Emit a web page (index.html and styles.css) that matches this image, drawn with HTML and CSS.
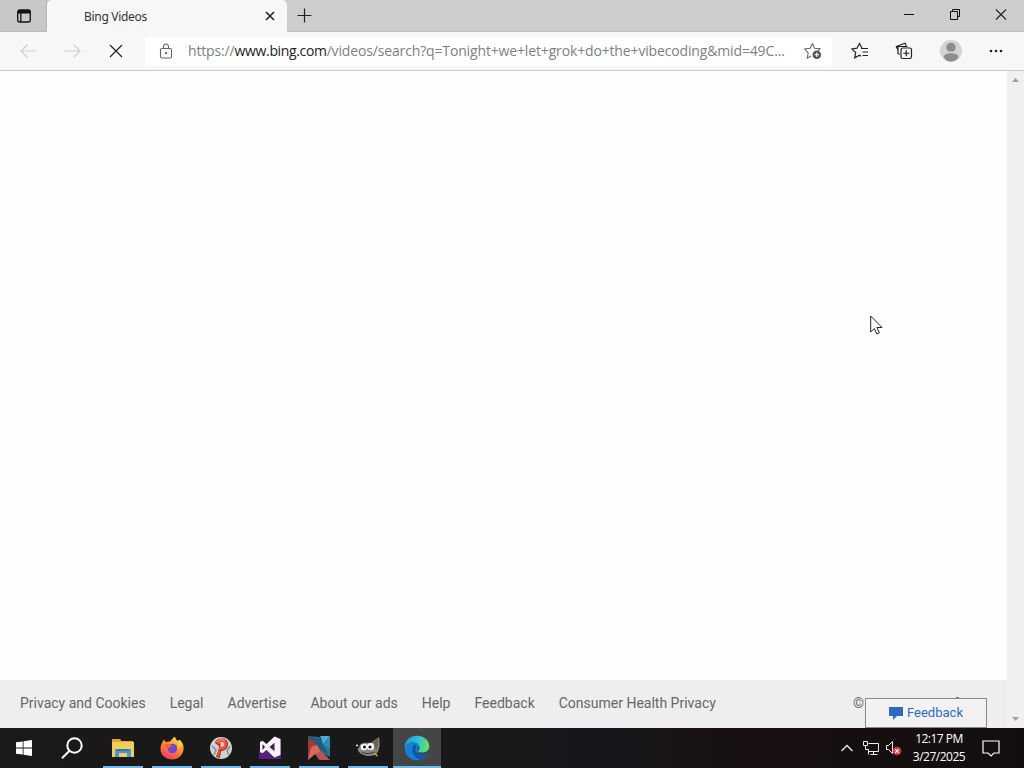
FILE: index.html
```html
<!DOCTYPE html>
<html lang="en">
<head>
    <meta charset="UTF-8">
    <meta name="viewport" content="width=device-width, initial-scale=1.0">
    <title>Bing Videos</title>
    <link rel="stylesheet" href="styles.css">
</head>
<body>
    <div class="title-bar">
        <div class="tab-actions">
            <svg width="16" height="16" viewBox="0 0 16 16" fill="none" stroke="#111" stroke-width="1.3">
                <rect x="1.7" y="2" width="12.6" height="12" rx="2"/>
                <path d="M2 3.2h12M2 4.6h12" stroke-width="1.7"/>
                <path d="M4.8 5v9"/>
            </svg>
        </div>
        <div class="tab">
            <span class="tab-title">Bing Videos</span>
            <svg width="10" height="10" viewBox="0 0 10 10" stroke="#222" stroke-width="1.6"><path d="M1 1l8 8M9 1L1 9"/></svg>
        </div>
        <svg class="new-tab" width="16" height="16" viewBox="0 0 16 16" stroke="#222" stroke-width="1.2"><path d="M7.500 .500v14M.500 7.500h14"/></svg>
        <div class="window-buttons">
            <svg width="46" height="30" viewBox="0 0 46 30" stroke="#111"><path d="M18 14.5h10"/></svg>
            <svg width="46" height="30" viewBox="0 0 46 30" fill="none" stroke="#111"><path d="M18.5 11.5h7v8h-7zM20.5 11.5v-2h7v7h-2"/></svg>
            <svg width="46" height="30" viewBox="0 0 46 30" stroke="#222" stroke-width="1.1"><path d="M18 9.5l10 10M28 9.5l-10 10"/></svg>
        </div>
    </div>

    <div class="toolbar">
        <div class="nav-buttons">
            <svg width="44" height="38" viewBox="0 0 44 38" fill="none" stroke="#d0d0d0" stroke-width="1.2"><path d="M36 19H21M27.5 12.500L21 19l6.500 6.500"/></svg>
            <svg width="44" height="38" viewBox="0 0 44 38" fill="none" stroke="#d0d0d0" stroke-width="1.2"><path d="M20 19h15.500M29.500 12.500L36 19l-6.500 6.500"/></svg>
            <svg width="44" height="38" viewBox="0 0 44 38" stroke="#222" stroke-width="1.2"><path d="M22 13l12 12M34 13L22 25"/></svg>
        </div>
        <div class="address-bar">
            <svg width="14" height="17" viewBox="0 0 14 17" fill="none" stroke="#666" stroke-width="1.1">
                <rect x="1.500" y="5.500" width="11" height="9.500" rx="1.500"/>
                <path d="M4.500 5.500V4a2.500 3 0 0 1 5 0v1.500"/>
                <circle cx="7" cy="10.200" r=".6" fill="#555"/>
            </svg>
            <span class="url">https://<b>www.bing.com</b>/videos/search?q=Tonight+we+let+grok+do+the+vibecoding&amp;mid=49C...</span>
            <svg class="add-favorite" width="18" height="18" viewBox="0 0 18 18" fill="none" stroke="#666" stroke-width="1.1">
                <path d="M8.500 1.500l2 4.800 5.500.5-2 2M7 14l-3.800 2.200 1-5.300L.8 7l5.400-.7 2.300-4.800"/>
                <circle cx="12.800" cy="12.800" r="4.300" fill="#555" stroke="none"/>
                <path d="M12.800 10.500v4.600M10.500 12.800h4.600" stroke="#fff"/>
            </svg>
        </div>
        <div class="tools">
            <svg width="18" height="18" viewBox="0 0 18 18" fill="none" stroke="#222" stroke-width="1.2">
                <path d="M11 6.200L8.500 1.500 6 6.200.8 6.900l3.900 3.600-1 5.300 4.800-2.500 1.500 1"/>
                <path d="M10 6.500h7M11.500 10H17M11.500 13.500H17"/>
            </svg>
            <svg width="18" height="18" viewBox="0 0 18 18" fill="none" stroke="#222" stroke-width="1.2">
                <path d="M4.500 12.500L3 11.500V8L1.300 4.500 10 1.200l1.300 2.500M3 10.500V4.500h9.500"/>
                <rect x="6" y="6" width="10.500" height="10.500" rx="1.800"/>
                <path d="M11.250 8.300v6M8.300 11.250h6"/>
            </svg>
            <svg width="22" height="22" viewBox="0 0 22 22">
                <circle cx="11" cy="11" r="11" fill="#d4d3d1"/>
                <circle cx="11" cy="7.500" r="4.700" fill="#8e8c8a"/>
                <path d="M3.700 17c0-5 14.600-5 14.600 0-1.500 3-4.500 4.500-7.300 4.500S5.200 20 3.700 17z" fill="#8e8c8a"/>
                <path d="M4.500 13.300q6.500-2.300 13 0" fill="none" stroke="#d4d3d1" stroke-width="1.300"/>
            </svg>
            <svg width="16" height="16" viewBox="0 0 16 16" fill="#222"><circle cx="3" cy="8" r="1.300"/><circle cx="8" cy="8" r="1.300"/><circle cx="13" cy="8" r="1.300"/></svg>
        </div>
    </div>

    <div class="viewport">
        <div class="page">
            <div class="footer">
                <span>Privacy and Cookies</span>
                <span>Legal</span>
                <span>Advertise</span>
                <span>About our ads</span>
                <span>Help</span>
                <span>Feedback</span>
                <span>Consumer Health Privacy</span>
                <span class="copyright">©</span>
            </div>
        </div>
        <div class="scrollbar">
            <svg width="7" height="4" viewBox="0 0 7 4" fill="#a0a0a0"><path d="M0 4L3.500 0 7 4z"/></svg>
            <svg width="7" height="4" viewBox="0 0 7 4" fill="#a0a0a0"><path d="M0 0h7L3.500 4z"/></svg>
        </div>
        <div class="feedback">
            <svg width="14" height="14" viewBox="0 0 14 14" fill="#2f6ac0"><path d="M0 1h14v9H8l-4 4v-4H0z"/></svg>
            <span>Feedback</span>
        </div>
    </div>

    <div class="taskbar">
        <div class="start">
            <svg width="16" height="16" viewBox="0 0 16 16" fill="#fff"><path d="M0 2.300l6.700-.9v6.200H0zM7.500 1.300L16 0v7.600H7.500zM0 8.400h6.700v6.200L0 13.700zM7.500 8.400H16V16l-8.500-1.300z"/></svg>
        </div>
        <div class="start">
            <svg width="22" height="22" viewBox="0 0 22 22" fill="none" stroke="#fff" stroke-width="2"><circle cx="13.500" cy="8.500" r="7.200"/><path d="M8.500 13.700L1 21.300"/></svg>
        </div>
        <div class="apps">
            <div class="app">
                <svg width="22" height="20" viewBox="0 0 22 20">
                    <path d="M0 1h8l1.500 2H21v3H0z" fill="#e2a52c"/>
                    <path d="M0 4h22v15H0z" fill="#f3cd5c"/>
                    <path d="M3 19v-8h16v8h-4v-4H7v4z" fill="#4a96cf"/>
                    <path d="M5 11h12v2H5z" fill="#3878ad"/>
                </svg>
            </div>
            <div class="app">
                <svg width="24" height="24" viewBox="0 0 24 24">
                    <defs>
                        <linearGradient id="fire" x1=".8" y1="0" x2=".3" y2="1">
                            <stop offset="0" stop-color="#ffe44a"/>
                            <stop offset=".5" stop-color="#ff8a2c"/>
                            <stop offset="1" stop-color="#f03470"/>
                        </linearGradient>
                    </defs>
                    <path d="M2.500 6L4 3.500 5.500 6 10 5.500 14.500.500 17 5l3-1c3 3 4 6 3.500 9.500C22.800 19.500 18 23.500 12.300 23.500 5.500 23.500.5 19 .5 13 .5 10 1.200 8 2.500 6z" fill="url(#fire)"/>
                    <circle cx="12.500" cy="12.500" r="4.800" fill="#7547cf"/>
                    <path d="M4.500 8c3-1 5.500-.5 7.500 2-1 2-4 1-4.500 3.500C5.500 13 4.500 11 4.500 8z" fill="#f5662b"/>
                    <path d="M14.500 1c1 4 5 6 3 13 3-3 4-6 2.500-10L17 5z" fill="#ffd33b"/>
                </svg>
            </div>
            <div class="app">
                <svg width="22" height="22" viewBox="0 0 22 22">
                    <circle cx="11" cy="11" r="11" fill="#ccd3d2"/>
                    <path d="M2 9l4 4-2 5M20 9l-3 5 2 4" stroke="#849394" stroke-width="1.500" fill="none"/>
                    <path d="M5 6C6 0 18 0 18 7c0 5-4 7-7 7l-1 7-4-1c1-4 3-7 3-11z" fill="#a92a1c"/>
                    <path d="M5 5.500C7 .500 17 .500 17 7c0 4-3.500 6-7 6L9 20l-2-1c1-4 3-8 2.500-12z" fill="#ec573d"/>
                    <path d="M10.500 5c3-.500 4 1 3.500 3-.5 1.500-2 2-3 2z" fill="#f3cfc6"/>
                    <path d="M7 5c2-3 6-3 8-1" stroke="#ff9c86" fill="none"/>
                </svg>
            </div>
            <div class="app">
                <svg width="24" height="24" viewBox="0 0 24 24">
                    <path d="M1 15l4 2 6-4 6 5v5H1z" fill="#54207b"/>
                    <path d="M17 23V1.500L23 4v19z" fill="#54207b"/>
                    <path d="M16.500.500L22.500 3v16l-6 2.500-8-7.500-4 3.300L2 16V6l2.500-1.300 4 3.300z" fill="#f8f2fb"/>
                    <path d="M4.500 8v6L7 11zM16.500 6.800v8.400L11.500 11z" fill="#3c1c52"/>
                </svg>
            </div>
            <div class="app">
                <svg width="24" height="24" viewBox="0 0 24 24">
                    <path d="M1 0l11 1 4 6 7-7v21l-8-4z" fill="#2f7496"/>
                    <path d="M1 0l12 3 9 16-9-5z" fill="#225b7d"/>
                    <path d="M13 0h10l-7 8z" fill="#4aaed6"/>
                    <path d="M16 8l7-7v12z" fill="#2f8bb5"/>
                    <path d="M1 1l8 7 5 7 9 9H12l-4-6-7 6z" fill="#a33b35"/>
                    <path d="M1 24l3-13 6-2 4 7-6 2z" fill="#d96858"/>
                    <path d="M14 15l9 9H13l-5-6z" fill="#b65450"/>
                </svg>
            </div>
            <div class="app">
                <svg width="26" height="22" viewBox="0 0 26 22">
                    <path d="M5 8c3-4 9-1 12-3l7-5c1 6 1 12-2 16-4 5-15 3-18-1-2-2-1-5 1-7z" fill="#8b867e"/>
                    <path d="M18 5l5-4c1 5 0 9-2 13z" fill="#67645f"/>
                    <circle cx="2.500" cy="9" r="2" fill="#151515"/>
                    <circle cx="2" cy="8.500" r="1" fill="#fff"/>
                    <circle cx="9" cy="10" r="3.300" fill="#fff"/><circle cx="15.500" cy="9.500" r="3.600" fill="#fff"/>
                    <circle cx="9.500" cy="10" r="1.500" fill="#111"/><circle cx="15" cy="10" r="1.600" fill="#111"/>
                    <path d="M7 15c5 3 9 1 13 0" fill="none" stroke="#37332f"/>
                    <path d="M17 16l5 1 1 3z" fill="#d99b54"/>
                </svg>
            </div>
            <div class="app active">
                <svg width="26" height="26" viewBox="0 0 26 26">
                    <defs>
                        <linearGradient id="wave" x1="0" y1=".5" x2="1" y2=".6">
                            <stop offset="0" stop-color="#1b9de0"/>
                            <stop offset=".5" stop-color="#2bbfd3"/>
                            <stop offset="1" stop-color="#6be45c"/>
                        </linearGradient>
                    </defs>
                    <path d="M.7 13C.7 6 6 2 12 4c4 1 5 5 3 7-3 2-2 9 3 9 2 0 4-.5 6-1.500-2 4-6 6.800-11 6.800C6 25.300.7 20 .7 13z" fill="#1681d3"/>
                    <path d="M.7 12C1 5 6.500.7 13 .7S25.300 5.500 25.300 11c0 5-4 6.500-7.500 6.500-3 0-4.500-.7-3-2.500 2-4-1-8-5.500-8C5 7 2 9 .7 12z" fill="url(#wave)"/>
                    <path d="M10 10c-4 4-1 13 6 14.800 3-.3 6-2.500 8-6.300-6 3-12 1-12.500-4 0-2 .5-3 1.500-4-.7-1-2-1.300-3-.5z" fill="#1058ad"/>
                </svg>
            </div>
        </div>
        <div class="tray">
            <svg width="12" height="8" viewBox="0 0 12 8" fill="none" stroke="#eee" stroke-width="1.300"><path d="M.5 7L6 1.500 11.500 7"/></svg>
            <svg class="network" width="17" height="15" viewBox="0 0 17 15" fill="none" stroke="#eee">
                <path d="M5.500 2.500h10v8h-10M10.500 10.500v3M7.500 13.500h7M.5.500h4v4h-4zM2.500 4.500v4h3v5"/>
            </svg>
            <svg class="volume" width="17" height="16" viewBox="0 0 17 16">
                <path d="M1.500 5.500h2l4-4v12l-4-4h-2z" fill="none" stroke="#eee"/>
                <circle cx="12" cy="11" r="4.300" fill="#d83941"/>
                <path d="M10.200 9.200l3.600 3.600M13.800 9.200l-3.600 3.600" stroke="#fff" stroke-width="1.200"/>
            </svg>
            <div class="clock">
                <span>12:17 PM</span>
                <span>3/27/2025</span>
            </div>
            <svg class="notifications" width="18" height="17" viewBox="0 0 18 17" fill="none" stroke="#fff" stroke-width="1.200"><path d="M1 1h16v12h-5l-3 3-3-3H1z"/></svg>
        </div>
    </div>

    <svg class="cursor" width="13" height="20" viewBox="0 0 13 20" fill="#fff" stroke="#222"><path d="M.7 1v16l3.600-3.500 2.600 5.500 2.500-1.200-2.600-5.300H12z"/></svg>
</body>
</html>
```

FILE: styles.css
```css
* {
    box-sizing: border-box;
}
body {
    margin: 0;
    width: 1024px;
    height: 768px;
    overflow: hidden;
    display: flex;
    flex-direction: column;
    font-family: "Open Sans", "Noto Sans", sans-serif;
    background-color: #fdfdfd;
}
svg {
    display: block;
    flex-shrink: 0;
}
.title-bar {
    display: flex;
    height: 32px;
    flex-shrink: 0;
    background-color: #cdcdcd;
    border-bottom: 1px solid #bdbdbd;
}
.tab-actions {
    width: 47px;
    padding: 8px 0 0 16px;
    background-color: #c8c8c8;
    border-right: 1px solid #b9b9b9;
    border-bottom-right-radius: 4px;
}
.tab {
    width: 240px;
    height: 32px;
    display: flex;
    align-items: center;
    justify-content: space-between;
    padding: 0 12px 0 37px;
    background-color: #f7f7f7;
    border-radius: 5px 5px 0 0;
}
.tab-title {
    font-family: "Noto Sans", sans-serif;
    font-size: 12px;
    letter-spacing: -0.3px;
    color: #333;
}
.new-tab {
    margin: 8px 0 0 10px;
}
.window-buttons {
    display: flex;
    margin-left: auto;
}
.toolbar {
    display: flex;
    align-items: center;
    height: 39px;
    flex-shrink: 0;
    background-color: #f7f7f7;
    border-bottom: 1px solid #cacaca;
}
.nav-buttons {
    display: flex;
    width: 145px;
}
.address-bar {
    display: flex;
    align-items: center;
    width: 687px;
    height: 29px;
    padding: 0 10px 0 14px;
    background-color: #fff;
    border-radius: 3px;
}
.url {
    margin-left: 15px;
    padding-bottom: 1px;
    font-size: 14px;
    letter-spacing: -0.15px;
    white-space: nowrap;
    color: #808080;
}
.url b {
    font-weight: normal;
    letter-spacing: -0.35px;
    color: #222;
}
.add-favorite {
    margin-left: auto;
}
.tools {
    display: flex;
    flex: 1;
    align-items: center;
    justify-content: space-between;
    padding: 0 20px 0 19px;
}
.viewport {
    position: relative;
    display: flex;
    flex: 1;
}
.page {
    display: flex;
    flex-direction: column;
    justify-content: flex-end;
    width: 1007px;
}
.footer {
    display: flex;
    align-items: center;
    gap: 24px;
    height: 48px;
    padding: 0 143px 2px 20px;
    background-color: #eee;
    font-family: Roboto, sans-serif;
    font-size: 14px;
    white-space: nowrap;
    color: #666;
}
.copyright {
    margin-left: auto;
}
.scrollbar {
    display: flex;
    flex-direction: column;
    align-items: center;
    justify-content: space-between;
    width: 17px;
    padding: 7px 0;
    background-color: #f0f0f0;
}
.feedback {
    position: absolute;
    right: 37px;
    bottom: 0;
    display: flex;
    align-items: center;
    justify-content: center;
    gap: 4px;
    width: 122px;
    height: 30px;
    padding-bottom: 1px;
    background-color: #f2f2f2;
    border: 1px solid #888;
    font-family: Roboto, sans-serif;
    font-size: 13px;
    color: #2f6ac0;
}
/* top of the copyright line showing above the button */
.feedback::before {
    content: "";
    position: absolute;
    top: -2px;
    left: 90px;
    width: 3px;
    height: 1px;
    background-color: #777;
}
.taskbar {
    display: flex;
    height: 40px;
    flex-shrink: 0;
    background: linear-gradient(90deg, #1b1919 0, #19191b 440px, #17161a 600px, #181012 760px, #120e0f 100%);
}
.start {
    display: flex;
    align-items: center;
    justify-content: center;
    width: 48px;
}
.apps {
    display: flex;
    gap: 1px;
    margin-left: 3px;
}
.app {
    display: flex;
    align-items: center;
    justify-content: center;
    width: 48px;
    background: linear-gradient(#76b9ed, #76b9ed) bottom / 40px 2px no-repeat;
}
.app.active {
    background-color: #444547;
    background-size: 100% 2px;
}
.tray {
    display: flex;
    align-items: center;
    margin-left: auto;
    padding-right: 24px;
}
.network {
    margin-left: 10px;
}
.volume {
    margin-left: 5px;
}
.clock {
    display: flex;
    flex-direction: column;
    align-items: center;
    width: 56px;
    margin-left: 9px;
    font-size: 12px;
    line-height: 18px;
    letter-spacing: -0.5px;
    white-space: nowrap;
    color: #fff;
}
.notifications {
    margin-left: 15px;
}
.cursor {
    position: absolute;
    left: 870px;
    top: 315px;
}
```
